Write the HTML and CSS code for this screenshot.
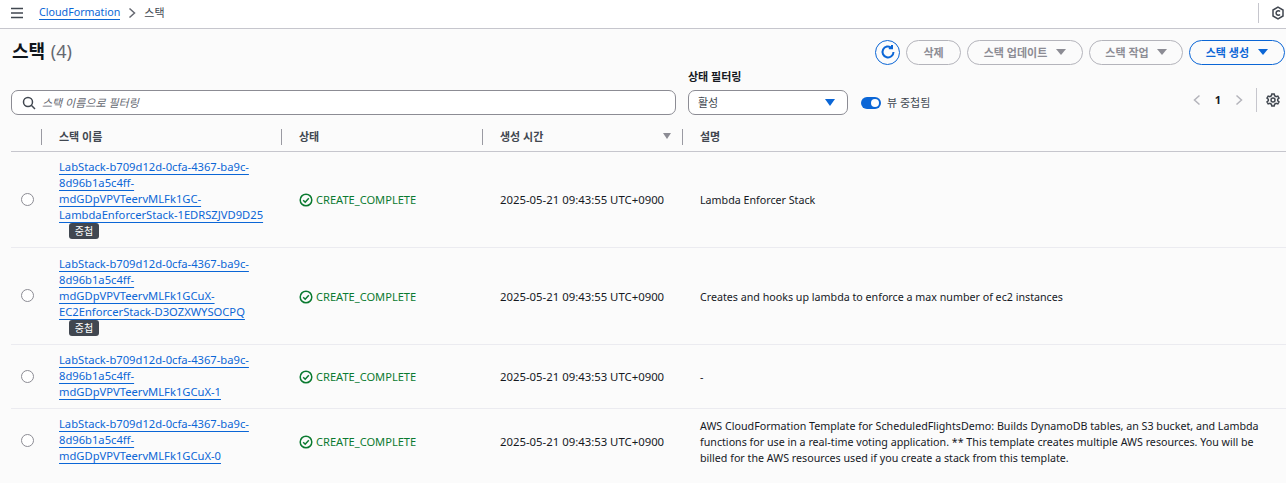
FILE: index.html
```html
<!DOCTYPE html>
<html lang="ko">

<head>
  <meta charset="UTF-8">
  <title>스택 - CloudFormation</title>
  <link rel="stylesheet" href="styles.css">
</head>

<body>

  <!-- Top bar -->
  <header class="topbar">
    <svg class="menu-icon" width="14" height="12" viewBox="0 0 14 12"><path d="M1 1.500h12M1 6h12M1 10.500h12" /></svg>
    <a class="crumb" href="#">CloudFormation</a>
    <svg class="crumb-sep" width="8" height="12" viewBox="0 0 8 12"><path d="M1.500 1.500 6.500 6l-5 4.500" /></svg>
    <span class="crumb-current">스택</span>
    <div class="topbar-right">
      <svg width="14" height="14" viewBox="0 0 14 14"><path d="M7 1.200 12 4v6l-5 2.800L2 10V4z" /><path d="M9 5.600a2.200 2.200 0 1 0 0 2.800" /></svg>
    </div>
  </header>

  <main>
    <div class="title-row">
      <h1>스택 <span class="count">(4)</span></h1>
      <div class="actions">
        <button class="refresh">
          <svg width="16" height="16" viewBox="0 0 16 16"><path d="M13.500 8a5.500 5.500 0 1 1-2-4.300" /><path d="M12 1v3.300H8.800" /></svg>
        </button>
        <button class="btn">삭제</button>
        <button class="btn">스택 업데이트 <i class="caret"></i></button>
        <button class="btn btn-tight">스택 작업 <i class="caret"></i></button>
        <button class="btn primary">스택 생성 <i class="caret"></i></button>
      </div>
    </div>

    <div class="filter-row">
      <div class="search">
        <svg width="14" height="14" viewBox="0 0 14 14"><circle cx="6" cy="6" r="4.500" /><path d="m9.300 9.300 3.700 3.700" /></svg>
        <span>스택 이름으로 필터링</span>
      </div>
      <div class="status-filter">
        <label>상태 필터링</label>
        <div class="select"><span>활성</span> <i class="caret"></i></div>
      </div>
      <div class="toggle-wrap">
        <span class="toggle"></span>
        <span>뷰 중첩됨</span>
      </div>
      <div class="pager">
        <svg width="8" height="12" viewBox="0 0 8 12"><path d="M6.500 1.500 1.500 6l5 4.500" /></svg>
        <b>1</b>
        <svg width="8" height="12" viewBox="0 0 8 12"><path d="M1.500 1.500 6.500 6l-5 4.500" /></svg>
        <span class="pager-sep"></span>
        <svg class="gear" width="14" height="14" viewBox="0 0 14 14"><path d="M5.800 1h2.400l.4 1.700 1.500.9 1.700-.5 1.200 2-1.300 1.200v1.400l1.300 1.200-1.200 2-1.700-.5-1.500.9L8.200 13H5.800l-.4-1.700-1.500-.9-1.700.5-1.200-2L2.300 7.700V6.300L1 5.100l1.200-2 1.700.5 1.500-.9z" /><circle cx="7" cy="7" r="2" /></svg>
      </div>
    </div>

    <table class="stacks">
      <thead>
        <tr>
          <th class="col-radio"></th>
          <th class="col-name"><span>스택 이름</span></th>
          <th class="col-status"><span>상태</span></th>
          <th class="col-time"><span>생성 시간</span><i class="caret"></i></th>
          <th class="col-desc"><span>설명</span></th>
        </tr>
      </thead>
      <tbody>
        <tr>
          <td><span class="radio"></span></td>
          <td>
            <a href="#">LabStack-b709d12d-0cfa-4367-ba9c-<br>8d96b1a5c4ff-<br>mdGDpVPVTeervMLFk1GC-<br>LambdaEnforcerStack-1EDRSZJVD9D25</a>
            <span class="badge">중첩</span>
          </td>
          <td class="cell-low"><span class="status"><svg width="14" height="14" viewBox="0 0 14 14"><circle cx="7" cy="7" r="5.800" /><path d="m4.200 7.200 2 2 3.600-4" /></svg>CREATE_COMPLETE</span></td>
          <td class="cell-low time">2025-05-21 09:43:55 UTC+0900</td>
          <td class="cell-low desc">Lambda Enforcer Stack</td>
        </tr>
        <tr class="row-tall">
          <td><span class="radio"></span></td>
          <td>
            <a href="#">LabStack-b709d12d-0cfa-4367-ba9c-<br>8d96b1a5c4ff-<br>mdGDpVPVTeervMLFk1GCuX-<br>EC2EnforcerStack-D3OZXWYSOCPQ</a>
            <span class="badge">중첩</span>
          </td>
          <td class="cell-low"><span class="status"><svg width="14" height="14" viewBox="0 0 14 14"><circle cx="7" cy="7" r="5.800" /><path d="m4.200 7.200 2 2 3.600-4" /></svg>CREATE_COMPLETE</span></td>
          <td class="cell-low time">2025-05-21 09:43:55 UTC+0900</td>
          <td class="cell-low desc">Creates and hooks up lambda to enforce a max number of ec2 instances</td>
        </tr>
        <tr>
          <td><span class="radio"></span></td>
          <td><a href="#">LabStack-b709d12d-0cfa-4367-ba9c-<br>8d96b1a5c4ff-<br>mdGDpVPVTeervMLFk1GCuX-1</a></td>
          <td class="cell-low"><span class="status"><svg width="14" height="14" viewBox="0 0 14 14"><circle cx="7" cy="7" r="5.800" /><path d="m4.200 7.200 2 2 3.600-4" /></svg>CREATE_COMPLETE</span></td>
          <td class="cell-low time">2025-05-21 09:43:53 UTC+0900</td>
          <td class="cell-low desc">-</td>
        </tr>
        <tr>
          <td><span class="radio"></span></td>
          <td><a href="#">LabStack-b709d12d-0cfa-4367-ba9c-<br>8d96b1a5c4ff-<br>mdGDpVPVTeervMLFk1GCuX-0</a></td>
          <td class="cell-low"><span class="status"><svg width="14" height="14" viewBox="0 0 14 14"><circle cx="7" cy="7" r="5.800" /><path d="m4.200 7.200 2 2 3.600-4" /></svg>CREATE_COMPLETE</span></td>
          <td class="cell-low time">2025-05-21 09:43:53 UTC+0900</td>
          <td class="cell-low desc">AWS CloudFormation Template for ScheduledFlightsDemo: Builds DynamoDB tables, an S3 bucket, and Lambda functions for use in a real-time voting application. ** This template creates multiple AWS resources. You will be billed for the AWS resources used if you create a stack from this template.</td>
        </tr>
      </tbody>
    </table>
  </main>

</body>

</html>
```

FILE: styles.css
```css
html,
body {
  height: 100%;
}

body {
  font-family: "Noto Sans", "Noto Sans CJK KR", sans-serif;
  font-size: 11px;
  line-height: 16px;
  background-color: #fbfbfb;
  color: #16191f;
  margin: 0;
  overflow: hidden;
}

svg {
  fill: none;
  stroke: currentColor;
  stroke-width: 1.5;
  flex: none;
}

a {
  color: #0b66d6;
}

.caret {
  display: inline-block;
  width: 0;
  height: 0;
  border-left: 5px solid transparent;
  border-right: 5px solid transparent;
  border-top: 7px solid currentColor;
}

/* Top bar */
.topbar {
  display: flex;
  align-items: center;
  height: 29px;
  box-sizing: border-box;
  background-color: #fff;
  border-bottom: 1px solid #c6c6cd;
  padding: 0 0 3px 10px;
}

.menu-icon {
  color: #414750;
  margin-right: 15px;
}

.crumb {
  font-size: 10.700px;
  text-decoration: none;
  border-bottom: 1px solid #0b66d6;
  line-height: 14px;
}

.crumb-sep {
  color: #656871;
  margin: 0 8px 0 8px;
}

.crumb-current {
  color: #414750;
}

.topbar-right {
  display: flex;
  align-items: center;
  height: 20px;
  margin-left: auto;
  padding: 0 1px 0 12px;
  border-left: 1px solid #c6c6cd;
  color: #414750;
}

/* Title and buttons */
main {
  padding: 0 0 0 11px;
}

.title-row {
  display: flex;
  justify-content: space-between;
  align-items: center;
  height: 42px;
  box-sizing: border-box;
  padding: 4px 1px 0 1px;
}

h1 {
  margin: 0 0 2px;
  font-size: 18px;
  line-height: 24px;
  font-weight: 700;
  color: #0f141a;
  word-spacing: 1px;
}

.count {
  font-weight: 400;
  color: #656871;
}

.actions {
  display: flex;
  align-items: center;
  gap: 6px;
}

.btn {
  display: flex;
  align-items: center;
  gap: 9px;
  height: 25px;
  padding: 0 16px;
  box-sizing: border-box;
  font: 700 11px "Noto Sans", "Noto Sans CJK KR", sans-serif;
  color: #8c8c94;
  background: #fbfbfb;
  border: 1px solid #b4b4bb;
  border-radius: 13px;
}

.btn .caret {
  border-top-width: 6px;
}

.btn-tight {
  gap: 8px;
  padding: 0 15px;
}

.primary {
  color: #0b66d6;
  border-color: #0b66d6;
}

.refresh {
  display: flex;
  align-items: center;
  justify-content: center;
  width: 25px;
  height: 25px;
  padding: 0;
  color: #0b66d6;
  background: #fbfbfb;
  border: 1px solid #0b66d6;
  border-radius: 50%;
}

.refresh svg {
  stroke-width: 2;
}

/* Filters */
.filter-row {
  display: flex;
  align-items: flex-end;
  height: 44px;
}

.search {
  display: flex;
  align-items: center;
  gap: 6px;
  width: 665px;
  height: 25px;
  box-sizing: border-box;
  padding-left: 10px;
  background: #fff;
  border: 1px solid #8c8c94;
  border-radius: 7px;
  color: #656871;
  font-style: italic;
}

.search svg {
  color: #414750;
}

.status-filter {
  margin-left: 12px;
}

.status-filter label {
  display: block;
  font-weight: 700;
  margin-bottom: 6px;
  line-height: 14px;
}

.select {
  display: flex;
  align-items: center;
  justify-content: space-between;
  width: 160px;
  height: 25px;
  box-sizing: border-box;
  padding: 0 12px 0 9px;
  background: #fff;
  border: 1px solid #8c8c94;
  border-radius: 7px;
  color: #414750;
}

.select span {
  padding-top: 1px;
}

.select .caret {
  color: #0b66d6;
}

.toggle-wrap {
  display: flex;
  align-items: center;
  gap: 6px;
  height: 25px;
  margin-left: 13px;
  color: #414750;
}

.toggle {
  position: relative;
  width: 20px;
  height: 12px;
  background: #0b66d6;
  border-radius: 6px;
}

.toggle::after {
  content: "";
  position: absolute;
  top: 2px;
  right: 2px;
  width: 8px;
  height: 8px;
  background: #fff;
  border-radius: 50%;
}

.pager {
  display: flex;
  align-items: center;
  height: 26px;
  margin-left: auto;
  margin-bottom: 2px;
  padding-right: 6px;
  color: #b4b4bb;
  gap: 14px;
}

.pager b {
  color: #16191f;
}

.pager-sep {
  width: 1px;
  height: 24px;
  margin: 0 -1px;
  background: #c6c6cd;
}

.gear {
  color: #414750;
  margin-left: -4px;
}

/* Table */
.stacks {
  width: 1275px;
  margin-top: 3px;
  border-collapse: collapse;
  table-layout: fixed;
}

.stacks th {
  height: 33px;
  padding: 5px 0 0;
  box-sizing: border-box;
  text-align: left;
  font-weight: 700;
  color: #414750;
  border-bottom: 1px solid #c6c6cd;
}

.stacks th span {
  display: block;
  padding-left: 17px;
  border-left: 1px solid #9a9aa2;
  height: 16px;
}

.col-radio {
  width: 30px;
}

.col-name {
  width: 240px;
}

.col-status {
  width: 201px;
}

.col-time {
  width: 200px;
  position: relative;
}

.col-time .caret {
  position: absolute;
  right: 11px;
  top: 15px;
  color: #8c8c94;
  border-left-width: 4px;
  border-right-width: 4px;
  border-top-width: 6px;
}

.stacks td {
  padding: 7px 16px 8px 18px;
  vertical-align: middle;
  border-bottom: 1px solid #ebebf0;
  color: #16191f;
}

.stacks tr:last-child td {
  border-bottom: none;
}

.stacks td:first-child {
  padding: 0 0 0 10px;
}

.stacks .row-tall td:nth-child(2) {
  padding-top: 8px;
}

.stacks .cell-low {
  padding-top: 9px;
  padding-bottom: 7px;
}

.stacks td a {
  font-size: 11.200px;
  white-space: nowrap;
  text-decoration: underline;
  text-underline-offset: 3px;
}

.stacks .time {
  font-size: 11.350px;
}

.stacks .desc {
  font-size: 10.700px;
}

.radio {
  display: block;
  width: 11px;
  height: 11px;
  border: 1px solid #8c8c94;
  border-radius: 50%;
  background: #fff;
}

.badge {
  display: block;
  width: 30px;
  margin-left: 10px;
  height: 16px;
  line-height: 16px;
  border-radius: 3px;
  background: #414750;
  color: #fff;
  text-align: center;
  font-size: 10px;
}

.status {
  display: flex;
  align-items: center;
  gap: 3px;
  font-size: 11.100px;
  color: #0a7a30;
}
```
